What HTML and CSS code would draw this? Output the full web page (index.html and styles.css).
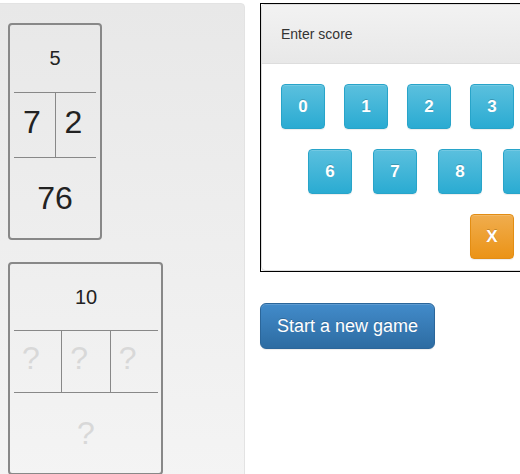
FILE: index.html
```html
<!DOCTYPE html>
<html>
<head>
<meta charset="utf-8">
<link rel="stylesheet" href="styles.css">
</head>
<body>
<div class="page">
  <div class="well">
    <div class="card card-narrow">
      <div class="card-top">5</div>
      <div class="card-mid">
        <div class="cell">7</div>
        <div class="cell">2</div>
      </div>
      <div class="card-bottom">76</div>
    </div>
    <div class="card card-wide">
      <div class="card-top">10</div>
      <div class="card-mid">
        <div class="cell unknown">?</div>
        <div class="cell unknown">?</div>
        <div class="cell unknown">?</div>
      </div>
      <div class="card-bottom unknown">?</div>
    </div>
  </div>
  <div class="side">
    <div class="board">
      <div class="panel">
        <div class="panel-heading">Enter score</div>
        <div class="panel-body">
          <div class="keys keys-1">
            <button class="key">0</button>
            <button class="key">1</button>
            <button class="key">2</button>
            <button class="key">3</button>
            <button class="key">4</button>
            <button class="key">5</button>
          </div>
          <div class="keys keys-2">
            <button class="key">6</button>
            <button class="key">7</button>
            <button class="key">8</button>
            <button class="key">9</button>
          </div>
          <div class="keys keys-3">
            <button class="key key-x">X</button>
          </div>
        </div>
      </div>
    </div>
    <button class="btn-start">Start a new game</button>
  </div>
</div>
</body>
</html>
```
FILE: styles.css
```css
html, body {
  margin: 0;
  padding: 0;
  overflow: hidden;
  background: #fff;
}
body {
  font-family: "Liberation Sans", Arial, Helvetica, sans-serif;
  color: #333;
  font-size: 14px;
}
.page {
  display: flex;
  align-items: flex-start;
  gap: 15px;
  padding-top: 3px;
  width: 900px;
}
.well {
  flex: none;
  margin-left: -12px;
  width: 257px;
  box-sizing: border-box;
  min-height: 520px;
  padding: 19px;
  border: 1px solid #e3e3e3;
  border-radius: 4px;
  background: linear-gradient(to bottom, #e8e8e8 0%, #f5f5f5 100%);
  display: flex;
  flex-direction: column;
  align-items: flex-start;
  gap: 22px;
}
.card {
  border: 2px solid #888;
  border-radius: 4px;
  padding: 0 4px 0;
  box-sizing: border-box;
}
.card-narrow { width: 94px; }
.card-wide { width: 155px; padding-right: 3px; }
.card-top {
  height: 67px;
  display: flex;
  align-items: center;
  justify-content: center;
  font-size: 20px;
  color: #222;
}
.card-mid {
  display: flex;
  border-top: 1px solid #888;
  border-bottom: 1px solid #888;
  height: 64px;
}
.card-wide .card-top { height: 66px; }
.card-wide .card-mid { height: 61px; }
.cell {
  flex: 1 1 0;
  display: flex;
  align-items: center;
  justify-content: flex-start;
  font-size: 32px;
  color: #222;
  padding: 0 0 6px 9px;
}
.card-wide .cell {
  padding-left: 8px;
}
.cell + .cell {
  border-left: 1px solid #888;
}
.card-bottom {
  height: 80px;
  display: flex;
  align-items: center;
  justify-content: center;
  font-size: 32px;
  color: #222;
}
.unknown {
  color: #d8d8d8;
}
.side {
  flex: none;
  display: flex;
  flex-direction: column;
  align-items: flex-start;
}
.board {
  border: 1px solid #000;
  width: 420px;
}
.panel {
  border: 1px solid #ddd;
  border-radius: 4px;
  background: #fff;
}
.panel-heading {
  padding: 19px 19px;
  line-height: 20px;
  font-size: 14px;
  color: #333;
  background: linear-gradient(to bottom, #f2f2f2 0%, #e8e8e8 100%);
  border-bottom: 1px solid #ddd;
  border-radius: 3px 3px 0 0;
}
.panel-body {
  padding: 20px 0 11px;
  display: flex;
  flex-direction: column;
  gap: 20px;
}
.keys {
  display: flex;
}
.keys-1 { padding-left: 19px; gap: 19px; }
.keys-2 { padding-left: 46px; gap: 21px; }
.keys-3 { padding-left: 208px; }
.key {
  width: 44px;
  height: 45px;
  flex: none;
  border: 1px solid #28a4c9;
  border-radius: 4px;
  background: linear-gradient(to bottom, #5bc0de 0%, #2aabd2 100%);
  color: #fff;
  font-family: "Liberation Sans", Arial, sans-serif;
  font-weight: bold;
  font-size: 17px;
  text-shadow: 0 -1px 0 rgba(0,0,0,0.2);
  box-shadow: inset 0 1px 0 rgba(255,255,255,0.15), 0 1px 1px rgba(0,0,0,0.075);
  padding: 0;
}
.key-x {
  border-color: #e38d13;
  background: linear-gradient(to bottom, #f0ad4e 0%, #eb9316 100%);
}
.btn-start {
  margin-top: 31px;
  padding: 10px 16px;
  font-family: "Liberation Sans", Arial, sans-serif;
  font-size: 18px;
  line-height: 24px;
  color: #fff;
  border: 1px solid #2b669a;
  border-radius: 6px;
  background: linear-gradient(to bottom, #428bca 0%, #2d6ca2 100%);
  text-shadow: 0 -1px 0 rgba(0,0,0,0.2);
  box-shadow: inset 0 1px 0 rgba(255,255,255,0.15), 0 1px 1px rgba(0,0,0,0.075);
}
```
